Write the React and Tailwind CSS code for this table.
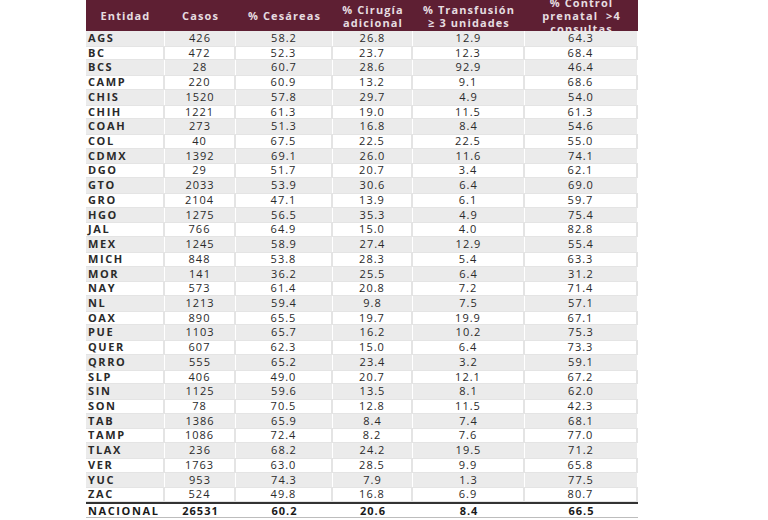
import React from "react";

const rows = [
  ["AGS", "426", "58.2", "26.8", "12.9", "64.3"],
  ["BC", "472", "52.3", "23.7", "12.3", "68.4"],
  ["BCS", "28", "60.7", "28.6", "92.9", "46.4"],
  ["CAMP", "220", "60.9", "13.2", "9.1", "68.6"],
  ["CHIS", "1520", "57.8", "29.7", "4.9", "54.0"],
  ["CHIH", "1221", "61.3", "19.0", "11.5", "61.3"],
  ["COAH", "273", "51.3", "16.8", "8.4", "54.6"],
  ["COL", "40", "67.5", "22.5", "22.5", "55.0"],
  ["CDMX", "1392", "69.1", "26.0", "11.6", "74.1"],
  ["DGO", "29", "51.7", "20.7", "3.4", "62.1"],
  ["GTO", "2033", "53.9", "30.6", "6.4", "69.0"],
  ["GRO", "2104", "47.1", "13.9", "6.1", "59.7"],
  ["HGO", "1275", "56.5", "35.3", "4.9", "75.4"],
  ["JAL", "766", "64.9", "15.0", "4.0", "82.8"],
  ["MEX", "1245", "58.9", "27.4", "12.9", "55.4"],
  ["MICH", "848", "53.8", "28.3", "5.4", "63.3"],
  ["MOR", "141", "36.2", "25.5", "6.4", "31.2"],
  ["NAY", "573", "61.4", "20.8", "7.2", "71.4"],
  ["NL", "1213", "59.4", "9.8", "7.5", "57.1"],
  ["OAX", "890", "65.5", "19.7", "19.9", "67.1"],
  ["PUE", "1103", "65.7", "16.2", "10.2", "75.3"],
  ["QUER", "607", "62.3", "15.0", "6.4", "73.3"],
  ["QRRO", "555", "65.2", "23.4", "3.2", "59.1"],
  ["SLP", "406", "49.0", "20.7", "12.1", "67.2"],
  ["SIN", "1125", "59.6", "13.5", "8.1", "62.0"],
  ["SON", "78", "70.5", "12.8", "11.5", "42.3"],
  ["TAB", "1386", "65.9", "8.4", "7.4", "68.1"],
  ["TAMP", "1086", "72.4", "8.2", "7.6", "77.0"],
  ["TLAX", "236", "68.2", "24.2", "19.5", "71.2"],
  ["VER", "1763", "63.0", "28.5", "9.9", "65.8"],
  ["YUC", "953", "74.3", "7.9", "1.3", "77.5"],
  ["ZAC", "524", "49.8", "16.8", "6.9", "80.7"],
];

const headers = [
  ["Entidad"],
  ["Casos"],
  ["% Cesáreas"],
  ["% Cirugía", "adicional"],
  ["% Transfusión", "≥ 3 unidades"],
  ["% Control", "prenatal  >4", "consultas"],
];

const cols = "grid grid-cols-[79px_71px_97px_80px_112px_113px]";

export default function App() {
  return (
    <div className="w-[768px] h-[520px] overflow-hidden bg-white pl-[86px] font-['Open_Sans','Noto_Sans',sans-serif] text-[11px]">
      <div className="w-[552px]">
        <div className={`${cols} h-[31px] bg-[#5e1f33] text-[#e6dde0] font-bold tracking-[1.1px]`}>
          {headers.map((h, i) => (
            <div key={i} className="flex flex-col items-center justify-center overflow-hidden leading-[13px] text-center">
              {h.map((line) => (
                <span key={line} className="whitespace-pre">{line}</span>
              ))}
            </div>
          ))}
        </div>
        {rows.map((r, i) => {
          const gray = i % 2 === 0;
          return (
            <div
              key={r[0]}
              className={`${cols} h-[14.72px] leading-[14px] text-[#2a2a2a] tracking-[1px] ${gray ? "bg-[#ebebeb]" : "bg-white shadow-[inset_0_1px_0_#e4e4e4,inset_0_-1px_0_#e4e4e4]"}`}
            >
              {r.map((c, j) => (
                <div
                  key={j}
                  className={`${gray ? "border-r border-white" : "border-r-2 border-[#e4e4e4]"} ${j === 0 ? "pl-[2px] font-bold tracking-[1.6px]" : "text-center"}`}
                >
                  {c}
                </div>
              ))}
            </div>
          );
        })}
        <div className={`${cols} h-[16px] leading-[14px] border-t-2 border-b border-t-[#333] border-b-[#bdbdbd] font-bold text-[#1a1a1a] tracking-[1px]`}>
          <div className="pl-[2px] tracking-[1.6px]">NACIONAL</div>
          <div className="text-center">26531</div>
          <div className="text-center">60.2</div>
          <div className="text-center">20.6</div>
          <div className="text-center">8.4</div>
          <div className="text-center">66.5</div>
        </div>
      </div>
    </div>
  );
}
